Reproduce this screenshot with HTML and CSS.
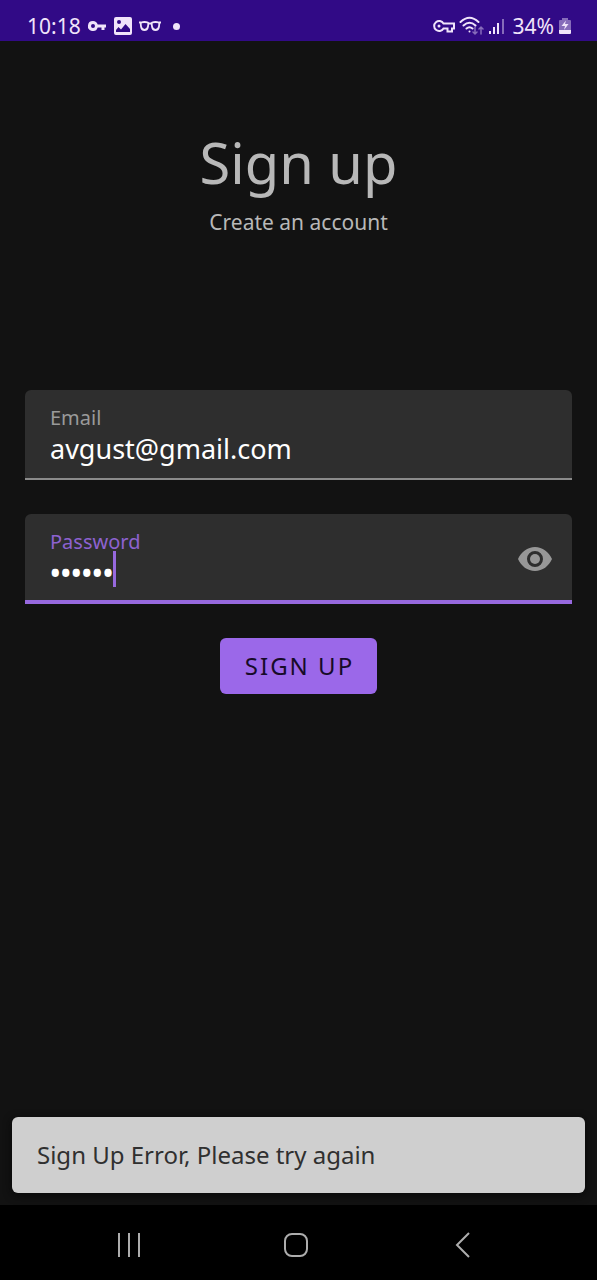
FILE: index.html
```html
<!DOCTYPE html>
<html lang="en">
<head>
<meta charset="utf-8">
<meta name="viewport" content="width=device-width, initial-scale=1">
<title>Sign up</title>
<link rel="stylesheet" href="styles.css">
</head>
<body>
<div class="screen">
  <header class="status">
    <div class="status-group">
      <span class="clock">10:18</span>
      <svg width="20" height="20" viewBox="0 0 20 20" fill="currentColor"><path fill-rule="evenodd" d="M6 5a5 5 0 0 1 4.700 3.500H19v3h-1.500V14h-3v-2.500h-3.800A5 5 0 1 1 6 5Zm0 3a2 2 0 1 0 0 4 2 2 0 0 0 0-4Z"/></svg>
      <svg width="20" height="20" viewBox="0 0 20 20" fill="currentColor"><path fill-rule="evenodd" d="M3 1h14a2 2 0 0 1 2 2v14a2 2 0 0 1-2 2H3a2 2 0 0 1-2-2V3a2 2 0 0 1 2-2Zm3 3a2 2 0 1 0 0 4 2 2 0 0 0 0-4ZM3 16h14v-3l-4.500-5-4.500 5.500L5.500 11 3 14Z"/></svg>
      <svg width="22" height="20" viewBox="0 0 22 20" fill="none" stroke="currentColor" stroke-width="1.800" stroke-linejoin="round"><path d="M0 6.500h2q3.500-1 7 0 .6 1 0 4Q8.500 14 5.500 14T2 10.500Q1.500 8 2 6.500M22 6.500h-2q-3.500-1-7 0-.6 1 0 4 .5 3.500 3.500 3.500t3.500-3.500Q20.500 8 20 6.500M9 7.500h4"/></svg>
      <span class="dot"></span>
    </div>
    <div class="status-group status-right">
      <svg width="22" height="20" viewBox="0 0 22 20" fill="none" stroke="currentColor" stroke-width="2"><path d="M10.500 7.500H21v5h-2v3h-4.500v-3h-4A5 5 0 1 1 10.500 7.500Z"/><circle cx="6" cy="10" r="1.500" fill="currentColor" stroke="none"/></svg>
      <svg width="25" height="20" viewBox="0 0 25 20" fill="none" stroke="currentColor" stroke-width="2" stroke-linecap="round"><path d="M1.500 6q9-8.500 18 0M4.500 9.500q6-5.500 12 0M7.500 12.500q3-2.500 6 0"/><circle cx="10.500" cy="15.500" r="1" fill="currentColor" stroke="none"/><path class="faint" stroke-width="1.500" d="M16 11v7m-2-2 2 2 2-2M22 18v-7m-2 2 2-2 2 2"/></svg>
      <svg class="signal" width="18" height="20" viewBox="0 0 18 20" fill="currentColor"><path d="M1 15h2v3H1zM5 11h2v7H5zM9 7h2v11H9z"/><path class="faint" d="M14 3h2v15h-2z"/></svg>
      <span class="battery-text">34%</span>
      <svg width="14" height="20" viewBox="0 0 14 20" fill="currentColor"><path class="faint" d="M4 2h6v2h2a1 1 0 0 1 1 1v9H1V5a1 1 0 0 1 1-1h2Z"/><path d="M1 14h12v3a1 1 0 0 1-1 1H2a1 1 0 0 1-1-1ZM8 4.500 3.500 10H7l-1 4 4.500-6H7Z"/></svg>
    </div>
  </header>

  <main class="content">
    <div class="intro">
      <h1 class="title">Sign up</h1>
      <p class="subtitle">Create an account</p>
    </div>
    <form class="form">
      <div class="field">
        <div class="field-body">
          <label class="label" for="email">Email</label>
          <input class="input" id="email" type="email" value="avgust@gmail.com">
        </div>
      </div>
      <div class="field field-active">
        <div class="field-body">
          <label class="label" for="password">Password</label>
          <div class="entry">
            <input class="input input-password" id="password" type="password" value="avgust">
            <span class="caret"></span>
          </div>
        </div>
        <button class="reveal" type="button" aria-label="Show password">
          <svg width="34" height="24" viewBox="0 0 34 24" fill="currentColor"><path fill-rule="evenodd" d="M17 0C9.500 0 3 5 0 12c3 7 9.500 12 17 12s14-5 17-12C31 5 24.500 0 17 0Zm0 4a8 8 0 1 1 0 16 8 8 0 0 1 0-16Z"/><circle cx="17" cy="12" r="5"/></svg>
        </button>
      </div>
      <button class="submit" type="button">SIGN UP</button>
    </form>
  </main>

  <div class="snackbar" role="alert">Sign Up Error, Please try again</div>

  <nav class="navbar">
    <button class="nav-button" type="button" aria-label="Recent apps"><svg width="26" height="26" viewBox="0 0 26 26" fill="none" stroke="currentColor" stroke-width="2"><path d="M3 1v24M13 1v24M23 1v24"/></svg></button>
    <button class="nav-button" type="button" aria-label="Home"><svg width="26" height="26" viewBox="0 0 26 26" fill="none" stroke="currentColor" stroke-width="2"><rect x="2" y="2" width="22" height="22" rx="7"/></svg></button>
    <button class="nav-button" type="button" aria-label="Back"><svg width="26" height="26" viewBox="0 0 26 26" fill="none" stroke="currentColor" stroke-width="2"><path d="M19 1 7 13l12 12"/></svg></button>
  </nav>
</div>
</body>
</html>
```
FILE: styles.css
```css
* {
  box-sizing: border-box;
}

body {
  margin: 0;
  background: #121212;
  color: #b8b8b8;
  font-family: "Noto Sans", "Open Sans", sans-serif;
}

button {
  border: 0;
  padding: 0;
  background: none;
  color: inherit;
  font-family: inherit;
}

svg {
  display: block;
  flex: none;
}

.screen {
  display: flex;
  flex-direction: column;
  min-height: 100vh;
}

.status {
  display: flex;
  justify-content: space-between;
  padding: 12px 25px 1px 27px;
  background: #310a86;
  color: #f0e4fa;
}

.status-group {
  display: flex;
  align-items: center;
  gap: 6px;
  font-size: 21px;
  line-height: 28px;
}

.status-right {
  gap: 4px;
}

.signal {
  margin-right: 3px;
}

.faint {
  opacity: 0.45;
}

.dot {
  width: 7px;
  height: 7px;
  margin-left: 6px;
  border-radius: 50%;
  background: currentColor;
}

.content {
  flex: 1;
  padding: 83px 25px 0;
}

.intro {
  text-align: center;
}

.title {
  margin: 0;
  font-size: 56px;
  font-weight: 400;
  line-height: 76px;
}

.subtitle {
  margin: 8px 0 0;
  font-size: 21px;
  line-height: 28px;
}

.form {
  display: flex;
  flex-direction: column;
  align-items: center;
  gap: 34px;
  margin-top: 154px;
}

.field {
  display: flex;
  align-items: center;
  width: 100%;
  height: 90px;
  padding: 0 20px 0 25px;
  border-radius: 6px 6px 0 0;
  border-bottom: 2px solid #8b8b8b;
  background: #2e2e2e;
}

.field-active {
  border-bottom: 4px solid #9769de;
}

.field-body {
  display: flex;
  flex: 1;
  flex-direction: column;
  align-self: flex-start;
  min-width: 0;
  padding-top: 16px;
}

.label {
  color: #9a9a9a;
  font-size: 20px;
  line-height: 24px;
}

.field-active .label {
  color: #8d62d0;
}

.input {
  display: block;
  width: 100%;
  height: 36px;
  padding: 0;
  border: 0;
  outline: 0;
  background: none;
  color: #fff;
  font-family: inherit;
  font-size: 27px;
}

.input-password {
  font-size: 28px;
  font-weight: 600;
}

.entry {
  position: relative;
}

.caret {
  position: absolute;
  top: -3px;
  left: 63px;
  width: 3px;
  height: 36px;
  background: #9769de;
}

.reveal {
  padding-top: 3px;
  color: #979797;
}

.submit {
  padding: 12px 23px 12px 25px;
  border-radius: 6px;
  background: #9b68e9;
  color: #170b28;
  font-size: 24px;
  letter-spacing: 2px;
  line-height: 32px;
}

.snackbar {
  margin: 12px;
  padding: 22px 25px;
  border-radius: 6px;
  background: #cfcfcf;
  box-shadow: 0 2px 8px #080808;
  color: #303030;
  font-size: 24px;
  line-height: 32px;
}

.navbar {
  display: flex;
  justify-content: space-around;
  padding: 4px 51px 0 45px;
  background: #000;
  color: #adadad;
}

.nav-button {
  display: grid;
  place-items: center;
  width: 72px;
  height: 71px;
}
```
